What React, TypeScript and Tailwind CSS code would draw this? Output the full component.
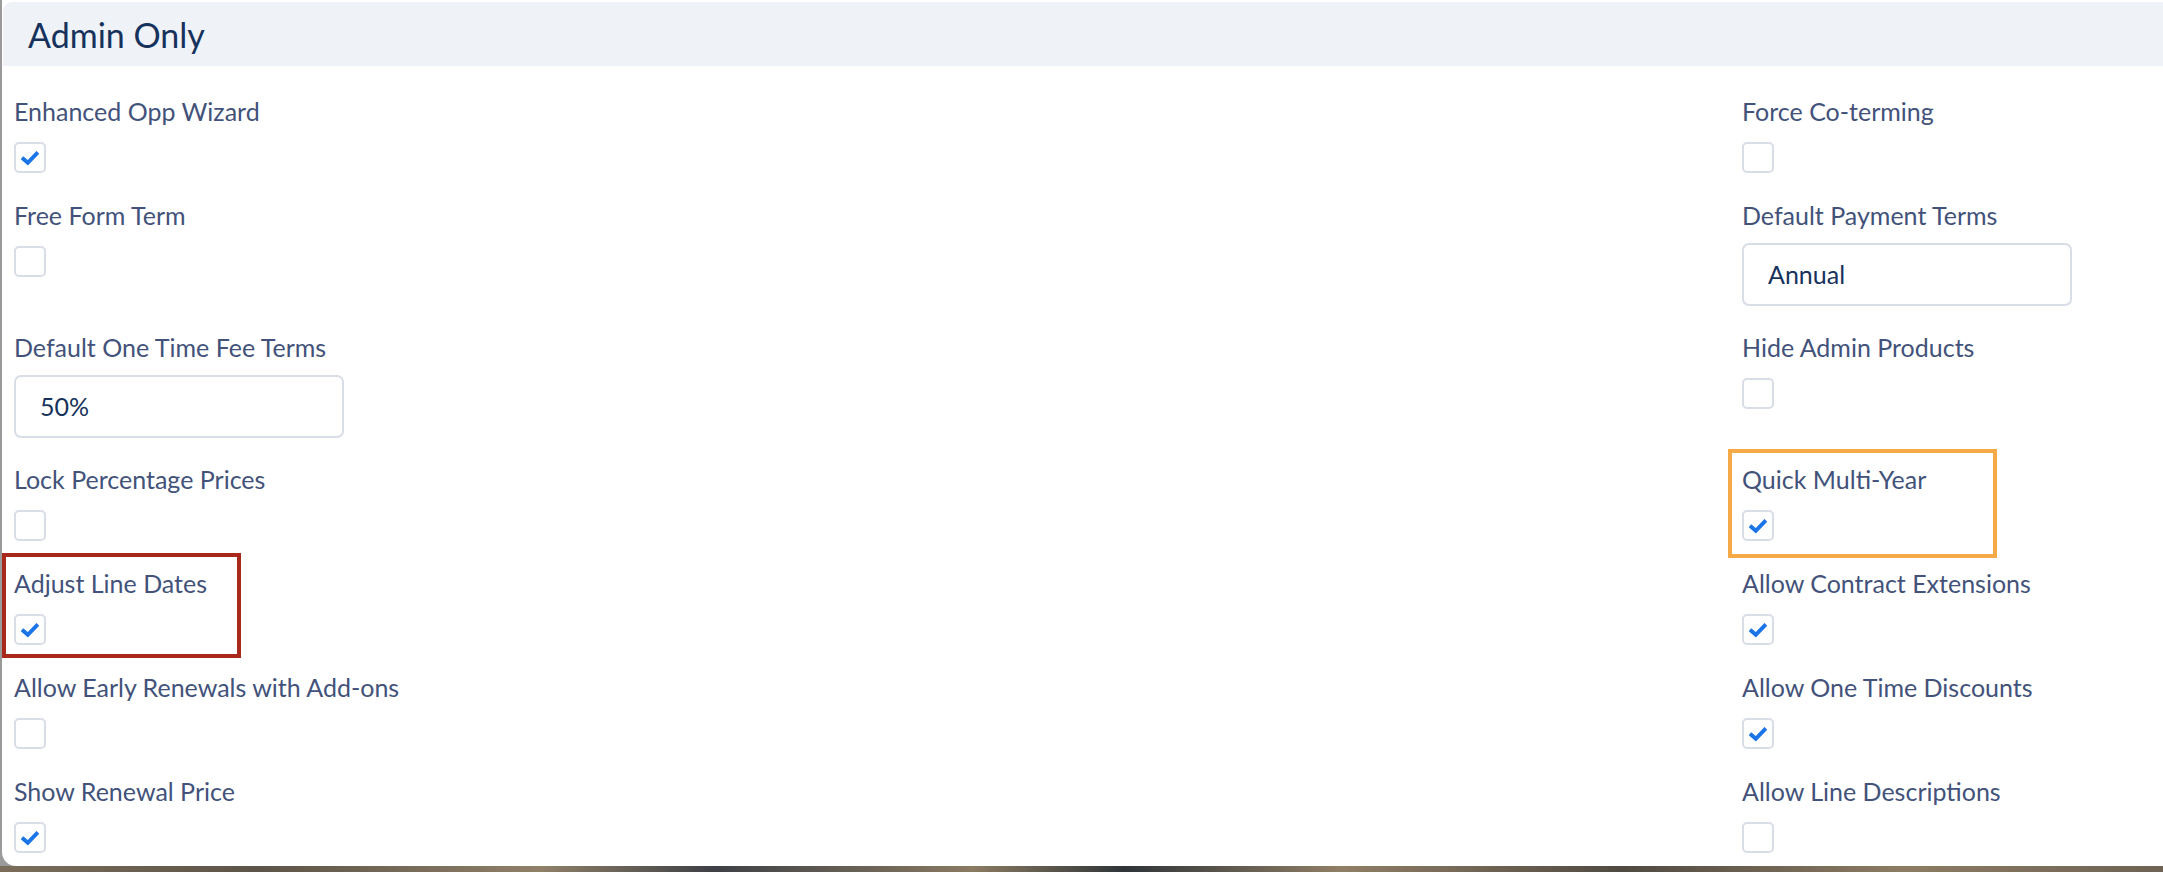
import React from "react";

type Field =
  | { label: string; kind: "check"; checked: boolean; mark?: "red" | "orange" }
  | { label: string; kind: "input"; value: string };

const rows: [Field, Field][] = [
  [
    { label: "Enhanced Opp Wizard", kind: "check", checked: true },
    { label: "Force Co-terming", kind: "check", checked: false },
  ],
  [
    { label: "Free Form Term", kind: "check", checked: false },
    { label: "Default Payment Terms", kind: "input", value: "Annual" },
  ],
  [
    { label: "Default One Time Fee Terms", kind: "input", value: "50%" },
    { label: "Hide Admin Products", kind: "check", checked: false },
  ],
  [
    { label: "Lock Percentage Prices", kind: "check", checked: false },
    { label: "Quick Multi-Year", kind: "check", checked: true, mark: "orange" },
  ],
  [
    { label: "Adjust Line Dates", kind: "check", checked: true, mark: "red" },
    { label: "Allow Contract Extensions", kind: "check", checked: true },
  ],
  [
    { label: "Allow Early Renewals with Add-ons", kind: "check", checked: false },
    { label: "Allow One Time Discounts", kind: "check", checked: true },
  ],
  [
    { label: "Show Renewal Price", kind: "check", checked: true },
    { label: "Allow Line Descriptions", kind: "check", checked: false },
  ],
];

const Checkbox = ({ checked }: { checked: boolean }) => (
  <div className="my-[3px] flex h-[31px] w-[32px] items-center justify-center rounded-[5px] border-2 border-[#d8dde6] bg-white">
    {checked && (
      <svg width="18" height="15" viewBox="0 0 18 15" className="mt-[2px]">
        <polyline
          points="2.5,8 6.8,11.8 15.5,2.8"
          fill="none"
          stroke="#1b74e8"
          strokeWidth="4"
          strokeLinecap="square"
        />
      </svg>
    )}
  </div>
);

const FieldCell = ({ field }: { field: Field }) => (
  <div className="relative flex flex-col pb-[24px]">
    {field.kind === "check" && field.mark === "red" && (
      <div className="pointer-events-none absolute left-[-12px] top-[-15px] h-[105px] w-[239px] border-4 border-[#a8291b]" />
    )}
    {field.kind === "check" && field.mark === "orange" && (
      <div className="pointer-events-none absolute left-[-14px] top-[-15px] h-[109px] w-[269px] border-4 border-[#f6aa47]" />
    )}
    <div className="h-[30px] text-[25px] leading-[30px] text-[#42527a]">
      {field.label}
    </div>
    <div className="mt-[13px]">
      {field.kind === "check" ? (
        <Checkbox checked={field.checked} />
      ) : (
        <div className="mb-[2px] flex h-[63px] w-[330px] items-center rounded-[7px] border-2 border-[#d8dde6] bg-white pl-[24px] text-[25px] text-[#16325c]">
          {field.value}
        </div>
      )}
    </div>
  </div>
);

export default function App() {
  return (
    <div
      className="h-[872px] w-[2163px] overflow-hidden bg-[linear-gradient(90deg,#7a6d5a_0%,#5c5448_12%,#8f8068_25%,#3e4046_33%,#8a7b62_45%,#2f3438_52%,#907f66_62%,#504a42_75%,#8c7c63_88%,#6d6253_100%)]"
      style={{ fontFamily: "Lato, 'Open Sans', sans-serif" }}
    >
      <div className="flex h-[866px] bg-[#9a9a9a]">
        <div className="ml-[2px] flex-1 rounded-bl-[14px] bg-white pl-[1px] pt-[2px]">
          <div className="flex h-[64px] items-center rounded-tl-[9px] bg-[#eff3f7] pl-[25px] text-[34px] text-[#16325c]">
            Admin Only
          </div>
          <div className="grid grid-cols-[1728px_1fr] pl-[11px] pt-[30px]">
            {rows.map((r, i) => (
              <React.Fragment key={i}>
                <FieldCell field={r[0]} />
                <FieldCell field={r[1]} />
              </React.Fragment>
            ))}
          </div>
        </div>
      </div>
    </div>
  );
}
